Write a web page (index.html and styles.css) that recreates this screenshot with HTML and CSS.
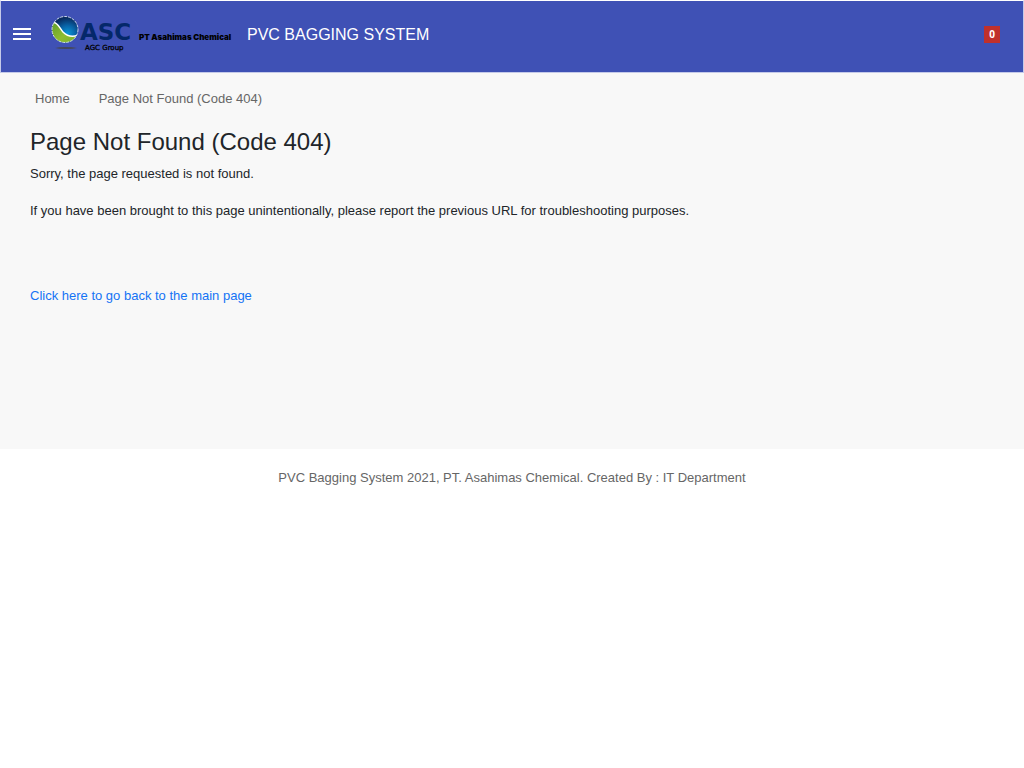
FILE: index.html
```html
<!DOCTYPE html>
<html lang="en">
<head>
<meta charset="utf-8">
<meta name="viewport" content="width=device-width, initial-scale=1">
<title>Page Not Found (Code 404)</title>
<link rel="stylesheet" href="styles.css">
</head>
<body>
<header class="navbar">
  <button class="menu-button" type="button" aria-label="Menu">
    <svg width="18" height="12" viewBox="0 0 18 12" fill="#fff" aria-hidden="true"><path d="M0 0h18v2H0zM0 5h18v2H0zM0 10h18v2H0z"/></svg>
  </button>
  <a class="brand" href="#">
    <svg class="logo" width="184" height="38" viewBox="0 0 184 38" role="img" aria-label="ASC, AGC Group, PT Asahimas Chemical">
      <defs>
        <radialGradient id="blue" cx="0.6" cy="0.65" r="0.6"><stop offset="0" stop-color="#0a98d8"/><stop offset="0.5" stop-color="#0864a8"/><stop offset="1" stop-color="#082c60"/></radialGradient>
        <linearGradient id="green" x1="0" y1="0" x2="1" y2="1"><stop offset="0" stop-color="#5f9d2c"/><stop offset="0.5" stop-color="#8fbd30"/><stop offset="1" stop-color="#71aa2e"/></linearGradient>
        <radialGradient id="shade"><stop offset="0" stop-color="#41434f"/><stop offset="0.6" stop-color="#454a68"/><stop offset="1" stop-color="#3f51b5"/></radialGradient>
        <clipPath id="globe"><circle cx="14" cy="13.5" r="13"/></clipPath>
      </defs>
      <ellipse cx="15" cy="32" rx="12" ry="1.5" fill="url(#shade)"/>
      <circle cx="14" cy="13.5" r="13" fill="url(#blue)"/>
      <g clip-path="url(#globe)">
        <path d="M0 7C6 5 8 11 12 16C16 20 22 22 29 18V30H0Z" fill="url(#green)"/>
        <path d="M0 7C6 5 8 11 12 16C16 20 22 22 29 18" fill="none" stroke="#fff" stroke-width="1.5"/>
      </g>
      <circle cx="14" cy="13.5" r="13" fill="none" stroke="#dfe8f5" stroke-width="0.9" stroke-dasharray="3 1"/>
      <text class="logo-name" x="29" y="24">ASC</text>
      <text class="logo-group" x="34" y="34">AGC Group</text>
      <text class="logo-company" x="88" y="24">PT Asahimas Chemical</text>
    </svg>
  </a>
  <span class="app-name">PVC BAGGING SYSTEM</span>
  <span class="badge">0</span>
</header>
<main class="content">
  <nav class="breadcrumb" aria-label="Breadcrumb">
    <a href="#">Home</a>
    <a href="#">Page Not Found (Code 404)</a>
  </nav>
  <h1>Page Not Found (Code 404)</h1>
  <p>Sorry, the page requested is not found.</p>
  <p>If you have been brought to this page unintentionally, please report the previous URL for troubleshooting purposes.</p>
  <a class="back-link" href="#">Click here to go back to the main page</a>
</main>
<footer class="footer">PVC Bagging System 2021, PT. Asahimas Chemical. Created By : IT Department</footer>
</body>
</html>
```
FILE: styles.css
```css
* { box-sizing: border-box; }
body {
  margin: 0;
  background: #fff;
  color: #212529;
  font-family: "Liberation Sans", Arial, sans-serif;
  font-size: 13px;
  line-height: 20px;
}
a { text-decoration: none; }
.navbar {
  display: flex;
  align-items: flex-start;
  min-height: 73px;
  padding: 15px 23px 18px 12px;
  background: #3f51b5;
  border: 1px solid #c5cae9;
  border-top-color: #fff;
}
.menu-button {
  display: flex;
  margin-top: 12px;
  padding: 0;
  border: 0;
  background: none;
}
.brand { display: flex; margin-left: 20px; }
.logo { display: block; }
.logo-name { font: bold 23px "DejaVu Sans", sans-serif; fill: #04286a; }
.logo-group { font: 7px "DejaVu Sans", sans-serif; fill: #000; stroke: #000; stroke-width: 0.3px; }
.logo-company { font: 900 8px Inter, sans-serif; fill: #000; }
.app-name { margin: 9px 0 0 12px; color: #fff; font-size: 16px; }
.badge {
  margin: 10px 0 0 auto;
  padding: 0 5px;
  background: #c0302b;
  color: #fff;
  font-family: "Noto Sans", sans-serif;
  font-size: 10px;
  font-weight: bold;
  line-height: 17px;
}
.content { min-height: 376px; padding: 16px 30px; background: #f8f8f8; }
.breadcrumb { display: flex; gap: 29px; padding-left: 5px; }
.breadcrumb a { color: #666; }
h1 { margin: 18px 0 7px; font-size: 24px; font-weight: 400; line-height: 30px; }
p { margin: 0 0 17px; }
.back-link { display: inline-block; margin-top: 48px; color: #1473f5; }
.footer { padding: 19px 30px; color: #666; text-align: center; }
```
